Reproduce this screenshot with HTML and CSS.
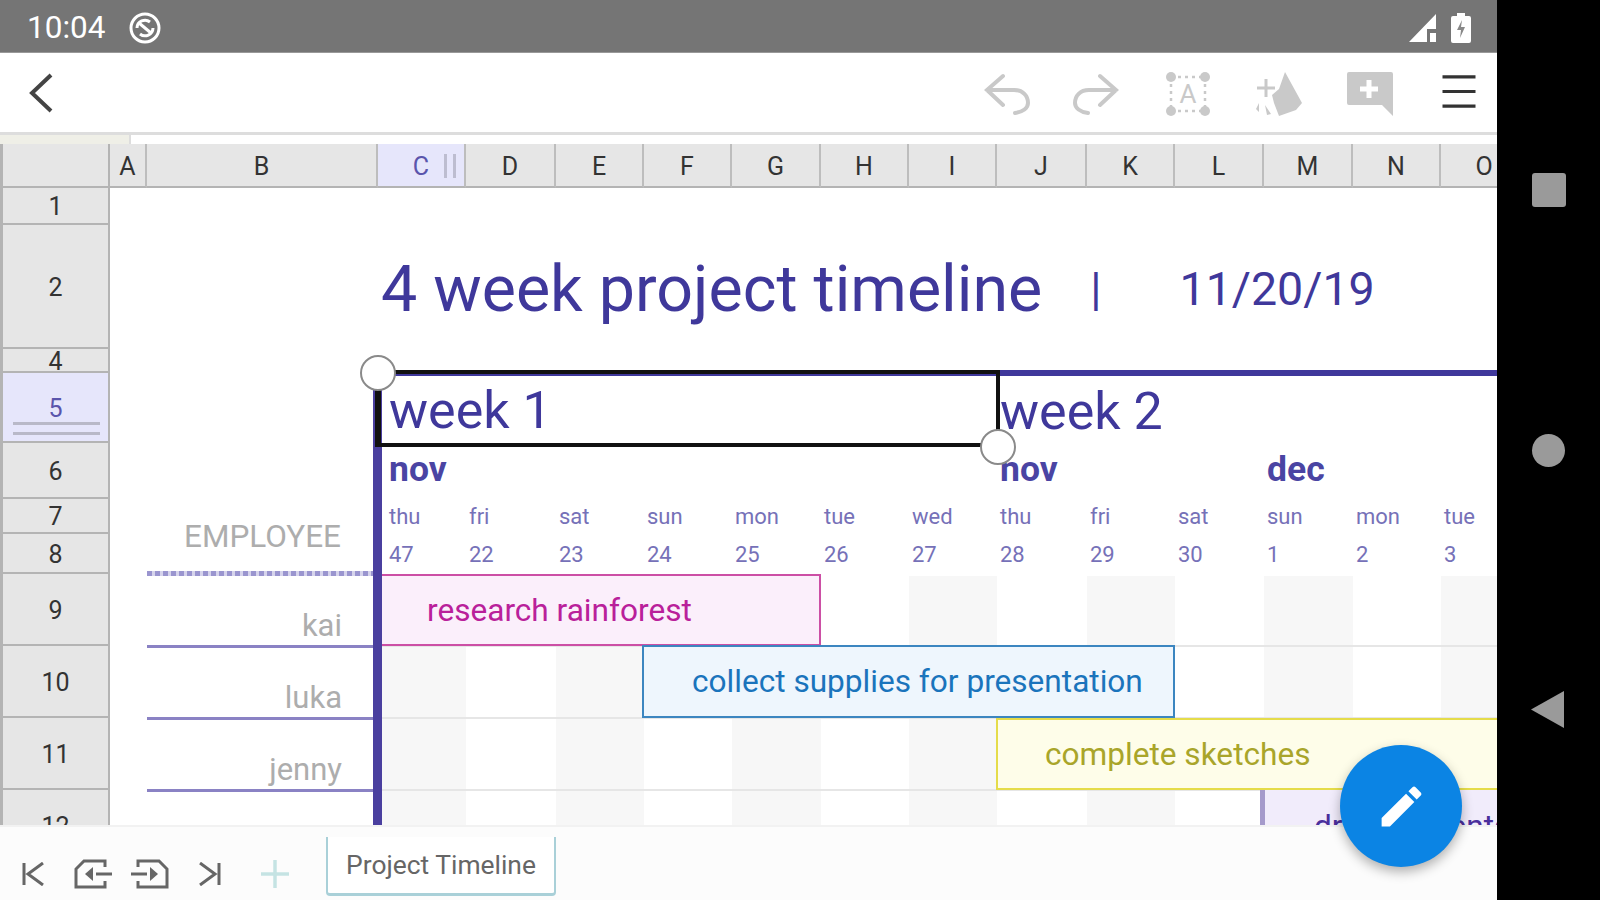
FILE: index.html
```html
<!DOCTYPE html>
<html lang="en">
<head>
    <meta charset="UTF-8">
    <meta name="viewport" content="width=device-width, initial-scale=1.0">
    <title>Project Timeline</title>
    <link rel="stylesheet" href="styles.css">
</head>
<body>
    <div class="device">
        <div class="screen">
            <div class="status-bar">
                <div class="status-left">
                    <span class="clock">10:04</span>
                    <svg width="34" height="34" viewBox="0 0 34 34" fill="none" stroke="#fff">
                        <circle cx="17" cy="17" r="14" stroke-width="3"/>
                        <path d="M9 17a8 8 0 0 1 13-6M25 17a8 8 0 0 1-13 6" stroke-width="3"/>
                        <path d="M11 12l12 10" stroke-width="3"/>
                    </svg>
                </div>
                <div class="status-right">
                    <svg width="28" height="30" viewBox="0 0 28 30" fill="#fff">
                        <path d="M0 29L27 1v15h-9v13z"/>
                        <path d="M21 20h6v9h-6z"/>
                    </svg>
                    <svg width="20" height="30" viewBox="0 0 20 30">
                        <path fill="#fff" d="M6 0h8v3h4a2 2 0 0 1 2 2v23a2 2 0 0 1-2 2H2a2 2 0 0 1-2-2V5a2 2 0 0 1 2-2h4z"/>
                        <path fill="#888" d="M11 7l-5 10h4l-1 8 5-11h-4z"/>
                    </svg>
                </div>
            </div>

            <header class="toolbar">
                <svg class="back" width="26" height="40" viewBox="0 0 26 40" fill="none" stroke="#444" stroke-width="4">
                    <path d="M23 2L4 20l19 18"/>
                </svg>
                <div class="tools">
                    <svg width="46" height="42" viewBox="0 0 46 42" fill="none" stroke="#c9c9c9" stroke-width="4" stroke-linecap="round">
                        <path d="M19 3L3 17l16 15M3 17h27c9 0 14 6 14 13 0 5-5 9-13 10"/>
                    </svg>
                    <svg width="46" height="42" viewBox="0 0 46 42" fill="none" stroke="#c9c9c9" stroke-width="4" stroke-linecap="round">
                        <path d="M27 3l16 14-16 15M43 17H16C7 17 2 23 2 30c0 5 5 9 13 10"/>
                    </svg>
                    <svg class="select-tool" width="46" height="46" viewBox="0 0 46 46" fill="#c9c9c9">
                        <circle cx="6" cy="6" r="5"/><circle cx="40" cy="6" r="5"/>
                        <circle cx="6" cy="40" r="5"/><circle cx="40" cy="40" r="5"/>
                        <path d="M6 6h34M6 40h34M6 6v34M40 6v34" fill="none" stroke="#c9c9c9" stroke-width="2.5" stroke-dasharray="3 4"/>
                        <text x="23" y="32" font-size="26" text-anchor="middle" font-family="Roboto, sans-serif">A</text>
                    </svg>
                    <svg width="50" height="46" viewBox="0 0 50 46" fill="#c9c9c9">
                        <path d="M32 1l17 31-6 7-17 6-5-13-2-8 7-6z"/>
                        <path d="M13 8v18M4 17h18" fill="none" stroke="#c9c9c9" stroke-width="3"/>
                        <path d="M6 32l-3 6 3 3zM12 34l2 10 4-1z"/>
                    </svg>
                    <svg width="46" height="44" viewBox="0 0 46 44">
                        <path fill="#c9c9c9" d="M2 0h42a2 2 0 0 1 2 2v42L35 33H2a2 2 0 0 1-2-2V2a2 2 0 0 1 2-2z"/>
                        <path fill="none" stroke="#fff" stroke-width="5" d="M22 8v18M13 17h18"/>
                    </svg>
                    <svg class="menu" width="36" height="36" viewBox="0 0 36 36" stroke="#333" stroke-width="3.5">
                        <path d="M0 2h36M0 18h36M0 34h36"/>
                    </svg>
                </div>
            </header>

            <div class="ruler"><div class="ruler-thumb"></div></div>

            <div class="sheet">
                <!-- sheet background -->
                <div class="stripe c-c"></div>
                <div class="stripe c-e"></div>
                <div class="stripe c-g"></div>
                <div class="stripe c-i"></div>
                <div class="stripe c-k"></div>
                <div class="stripe c-m"></div>
                <div class="stripe c-o"></div>
                <div class="row-line r-9"></div>
                <div class="row-line r-10"></div>
                <div class="row-line r-11"></div>

                <!-- column headers -->
                <div class="corner"></div>
                <div class="col-head c-a">A</div>
                <div class="col-head c-b">B</div>
                <div class="col-head c-c selected">C<span class="grip-v"></span></div>
                <div class="col-head c-d">D</div>
                <div class="col-head c-e">E</div>
                <div class="col-head c-f">F</div>
                <div class="col-head c-g">G</div>
                <div class="col-head c-h">H</div>
                <div class="col-head c-i">I</div>
                <div class="col-head c-j">J</div>
                <div class="col-head c-k">K</div>
                <div class="col-head c-l">L</div>
                <div class="col-head c-m">M</div>
                <div class="col-head c-n">N</div>
                <div class="col-head c-o">O</div>

                <!-- row headers -->
                <div class="row-head r-1">1</div>
                <div class="row-head r-2">2</div>
                <div class="row-head r-4">4</div>
                <div class="row-head r-5 selected">5<span class="grip-h"></span></div>
                <div class="row-head r-6">6</div>
                <div class="row-head r-7">7</div>
                <div class="row-head r-8">8</div>
                <div class="row-head r-9">9</div>
                <div class="row-head r-10">10</div>
                <div class="row-head r-11">11</div>
                <div class="row-head r-12">12</div>

                <!-- title -->
                <div class="title-cell">
                    <span class="title">4 week project timeline</span>
                    <span class="title-sep">|</span>
                    <span class="title-date">11/20/19</span>
                </div>

                <!-- weeks -->
                <div class="week-line"></div>
                <div class="week week-two">week 2</div>
                <div class="month c-c">nov</div>
                <div class="month c-j">nov</div>
                <div class="month c-m">dec</div>

                <div class="day r-7 c-c first">thu</div>
                <div class="day r-7 c-d">fri</div>
                <div class="day r-7 c-e">sat</div>
                <div class="day r-7 c-f">sun</div>
                <div class="day r-7 c-g">mon</div>
                <div class="day r-7 c-h">tue</div>
                <div class="day r-7 c-i">wed</div>
                <div class="day r-7 c-j">thu</div>
                <div class="day r-7 c-k">fri</div>
                <div class="day r-7 c-l">sat</div>
                <div class="day r-7 c-m">sun</div>
                <div class="day r-7 c-n">mon</div>
                <div class="day r-7 c-o">tue</div>

                <div class="day r-8 c-c first">47</div>
                <div class="day r-8 c-d">22</div>
                <div class="day r-8 c-e">23</div>
                <div class="day r-8 c-f">24</div>
                <div class="day r-8 c-g">25</div>
                <div class="day r-8 c-h">26</div>
                <div class="day r-8 c-i">27</div>
                <div class="day r-8 c-j">28</div>
                <div class="day r-8 c-k">29</div>
                <div class="day r-8 c-l">30</div>
                <div class="day r-8 c-m">1</div>
                <div class="day r-8 c-n">2</div>
                <div class="day r-8 c-o">3</div>

                <!-- employees -->
                <div class="employee-head">EMPLOYEE</div>
                <div class="employee-rule"></div>
                <div class="employee r-9">kai</div>
                <div class="employee r-10">luka</div>
                <div class="employee r-11">jenny</div>

                <!-- tasks -->
                <div class="task task-research">research rainforest</div>
                <div class="task task-supplies">collect supplies for presentation</div>
                <div class="task task-sketches">complete sketches</div>
                <div class="task task-draft">draft presentation</div>

                <div class="axis"></div>

                <!-- current selection -->
                <div class="selection">
                    <span class="week-one">week 1</span>
                    <span class="handle handle-start"></span>
                    <span class="handle handle-end"></span>
                </div>
            </div>

            <footer class="tabs">
                <div class="tab-nav">
                    <svg width="22" height="24" viewBox="0 0 22 24" fill="none" stroke="#666" stroke-width="3">
                        <path d="M2 1v22M21 1L6 12l15 11"/>
                    </svg>
                    <svg width="38" height="30" viewBox="0 0 38 30" fill="none" stroke="#666" stroke-width="3">
                        <path d="M31 8V2H10L2 10v18h29v-6M22 15h16"/>
                        <path d="M19 8v14l-8-7z" fill="#666" stroke="none"/>
                    </svg>
                    <svg width="38" height="30" viewBox="0 0 38 30" fill="none" stroke="#666" stroke-width="3">
                        <path d="M7 8V2h21l8 8v18H7v-6M0 15h16"/>
                        <path d="M19 8v14l8-7z" fill="#666" stroke="none"/>
                    </svg>
                    <svg width="22" height="24" viewBox="0 0 22 24" fill="none" stroke="#666" stroke-width="3">
                        <path d="M20 1v22M1 1l15 11L1 23"/>
                    </svg>
                    <svg class="add-sheet" width="28" height="28" viewBox="0 0 28 28" stroke="#c5e3e3" stroke-width="3.5">
                        <path d="M14 0v28M0 14h28"/>
                    </svg>
                </div>
                <div class="tab">Project Timeline</div>
            </footer>

            <button class="fab">
                <svg width="53" height="53" viewBox="0 0 24 24" fill="#fff">
                    <path d="M3 17.25V21h3.75L17.81 9.94l-3.75-3.75L3 17.25zM20.71 7.04c.39-.39.39-1.02 0-1.41l-2.34-2.34c-.39-.39-1.02-.39-1.41 0l-1.83 1.83 3.75 3.75 1.83-1.83z"/>
                </svg>
            </button>
        </div>

        <nav class="nav-bar">
            <div class="nav-square"></div>
            <div class="nav-circle"></div>
            <div class="nav-back"></div>
        </nav>
    </div>
</body>
</html>
```

FILE: styles.css
```css
* {
    margin: 0;
    padding: 0;
    box-sizing: border-box;
    font-family: Roboto, sans-serif;
}
body {
    background: #000;
    width: 1600px;
    height: 900px;
    overflow: hidden;
}
.device {
    display: flex;
    height: 900px;
}
.screen {
    position: relative;
    width: 1497px;
    display: flex;
    flex-direction: column;
    background: #fff;
}

/* status bar */
.status-bar {
    height: 53px;
    background: #757575;
    border-bottom: 1px solid #999;
    display: flex;
    justify-content: space-between;
    align-items: center;
    padding: 3px 26px 0 27px;
    color: #fff;
}
.status-left, .status-right {
    display: flex;
    align-items: center;
}
.status-left { gap: 23px; }
.status-right { gap: 14px; }
.clock {
    font-size: 31.5px;
}

/* toolbar */
.toolbar {
    height: 79px;
    display: flex;
    justify-content: space-between;
    align-items: center;
    padding: 0 20px 0 28px;
}
.tools {
    display: flex;
    align-items: center;
    gap: 44px;
    padding-top: 3px;
}
.tools svg:nth-child(1) { margin-right: -1px; }
.tools .select-tool { margin-left: 2px; margin-right: -2px; }
.tools .menu { margin-left: 4px; margin-top: -6px; height: 33px; }

.ruler {
    height: 12px;
    background: #fff;
    border-top: 3px solid #ddd;
}
.ruler-thumb {
    width: 131px;
    height: 9px;
    background: #efefe7;
    border-right: 2px solid #ddd;
}

/* sheet grid */
.sheet {
    height: 681px;
    overflow: hidden;
    display: grid;
    grid-template-columns: 110px 37px 231px 88px 90px 88px 88px 89px 88px 88px 90px 88px 89px 89px 88px 88px;
    grid-template-rows: 44px 37px 124px 24px 70px 56px 35px 40px 72px 72px 72px 72px;
}
.c-a { grid-column: 2; }
.c-b { grid-column: 3; }
.c-c { grid-column: 4; }
.c-d { grid-column: 5; }
.c-e { grid-column: 6; }
.c-f { grid-column: 7; }
.c-g { grid-column: 8; }
.c-h { grid-column: 9; }
.c-i { grid-column: 10; }
.c-j { grid-column: 11; }
.c-k { grid-column: 12; }
.c-l { grid-column: 13; }
.c-m { grid-column: 14; }
.c-n { grid-column: 15; }
.c-o { grid-column: 16; }
.r-1 { grid-row: 2; }
.r-2 { grid-row: 3; }
.r-4 { grid-row: 4; }
.r-5 { grid-row: 5; }
.r-6 { grid-row: 6; }
.r-7 { grid-row: 7; }
.r-8 { grid-row: 8; }
.r-9 { grid-row: 9; }
.r-10 { grid-row: 10; }
.r-11 { grid-row: 11; }
.r-12 { grid-row: 12; }

.stripe {
    grid-row: 9 / 13;
    background: #f7f7f7;
    margin-top: 2px;
}
.row-line {
    grid-column: 4 / 17;
    align-self: end;
    height: 2px;
    margin-bottom: -1px;
    background: #e6e6e6;
}

.corner, .col-head, .row-head {
    background: #e6e6e6;
    color: #333;
    font-size: 25px;
    display: flex;
    justify-content: center;
    align-items: center;
}
.corner {
    grid-column: 1;
    grid-row: 1;
    border-left: 3px solid #b4b4b4;
    border-right: 2px solid #b4b4b4;
    border-bottom: 2px solid #b4b4b4;
}
.col-head {
    grid-row: 1;
    border-right: 2px solid #bdbdbd;
    border-bottom: 2px solid #b4b4b4;
    padding-top: 2px;
}
.row-head {
    grid-column: 1;
    border-left: 3px solid #b4b4b4;
    border-right: 2px solid #b4b4b4;
    border-bottom: 2px solid #b4b4b4;
    padding-top: 2px;
}
.selected {
    background: #e6e6fb;
    color: #5a55ac;
    position: relative;
}
.grip-v {
    position: absolute;
    right: 8px;
    top: 10px;
    width: 12px;
    height: 24px;
    border-left: 3px solid #bdbdd0;
    border-right: 3px solid #bdbdd0;
}
.grip-h {
    position: absolute;
    left: 10px;
    bottom: 6px;
    width: 87px;
    height: 13px;
    border-top: 3px solid #b9b9c8;
    border-bottom: 3px solid #b9b9c8;
}

/* title row */
.title-cell {
    grid-column: 4 / 17;
    grid-row: 3;
    display: flex;
    align-items: center;
    color: #3f389b;
    padding-left: 3px;
    padding-top: 4px;
}
.title {
    font-size: 64.5px;
}
.title-sep {
    font-size: 46px;
    margin-left: 48px;
}
.title-date {
    font-size: 46.5px;
    margin-left: 78px;
}

/* weeks, months, days */
.week-line {
    grid-column: 4 / 17;
    grid-row: 5;
    height: 6px;
    margin-top: -3px;
    background: #3f389b;
}
.week {
    font-size: 52px;
    color: #3f389b;
    display: flex;
    align-items: center;
}
.week-two {
    grid-column: 11 / 15;
    grid-row: 5;
    padding-left: 3px;
    padding-top: 6px;
}
.month {
    grid-row: 6;
    font-size: 35.5px;
    font-weight: bold;
    color: #4a44a3;
    display: flex;
    align-items: center;
    white-space: nowrap;
    padding-left: 3px;
    padding-bottom: 4px;
}
.month.c-c { padding-left: 11px; }
.day {
    font-size: 22px;
    color: #7671b8;
    display: flex;
    align-items: center;
    padding-left: 3px;
}
.day.first { padding-left: 11px; }

/* employees */
.employee-head {
    grid-column: 3;
    grid-row: 7 / 9;
    font-size: 31.5px;
    color: #adadad;
    display: flex;
    justify-content: center;
    align-items: center;
}
.employee-rule {
    grid-column: 3;
    grid-row: 8;
    align-self: end;
    height: 5px;
    margin-bottom: -2px;
    background: repeating-linear-gradient(90deg, #9a95cf 0 5px, #d6d4ec 5px 8px);
}
.employee {
    grid-column: 3;
    font-size: 31px;
    color: #adadad;
    text-align: right;
    align-self: end;
    padding-right: 36px;
    line-height: 38px;
    margin-bottom: -2px;
    border-bottom: 3px solid #8a82c4;
}

/* task bars */
.task {
    font-size: 31.6px;
    display: flex;
    align-items: center;
    white-space: nowrap;
    overflow: hidden;
    padding-left: 47px;
    border: 2px solid;
}
.task-research {
    grid-column: 4 / 9;
    grid-row: 9;
    background: #fbeffb;
    border-color: #cc4fa5;
    border-left: 0;
    color: #b9209a;
    padding-left: 49px;
}
.task-supplies {
    grid-column: 7 / 13;
    grid-row: 10;
    background: #eef6fd;
    border-color: #3c86c0;
    color: #1a74bc;
    margin-top: -1px;
    margin-left: -2px;
    padding-left: 48px;
}
.task-sketches {
    grid-column: 11 / 17;
    grid-row: 11;
    background: #fefde9;
    border-color: #e5dc4a;
    color: #a9a52a;
    margin-left: -1px;
}
.task-draft {
    grid-column: 14 / 17;
    grid-row: 12;
    background: #f1ecfb;
    border: 0;
    border-left: 5px solid #a59acb;
    color: #4a2f9c;
    margin-left: -4px;
    padding-left: 49px;
}

.axis {
    grid-column: 4;
    grid-row: 4 / 13;
    margin-top: 24px;
    margin-left: -5px;
    width: 9px;
    background: #4a3f9f;
}

/* selected cell */
.selection {
    grid-column: 4 / 11;
    grid-row: 5;
    position: relative;
    height: 77px;
    margin-top: -3px;
    margin-left: -3px;
    margin-right: -3px;
    border: 4px solid #111;
    border-left-width: 6px;
    font-size: 52px;
    color: #3f389b;
    display: flex;
    align-items: center;
    padding-left: 8px;
    padding-top: 3px;
}
.handle {
    position: absolute;
    width: 36px;
    height: 36px;
    border-radius: 50%;
    background: #fff;
    border: 2px solid #8a8a8a;
}
.handle-start {
    left: -21px;
    top: -19px;
}
.handle-end {
    right: -20px;
    bottom: -22px;
}

/* bottom tabs */
.tabs {
    flex: 1;
    display: flex;
    background: #fcfcfc;
    border-top: 2px solid #f2f2f2;
    padding-left: 22px;
}
.tab-nav {
    display: flex;
    align-items: center;
    gap: 30px;
    width: 304px;
    padding-top: 20px;
}
.tab-nav svg:nth-child(3) { margin-left: -11px; }
.add-sheet { margin-left: 10px; }
.tab {
    width: 230px;
    height: 59px;
    margin-top: 10px;
    background: #fff;
    color: #666;
    font-size: 26.4px;
    display: flex;
    justify-content: center;
    align-items: center;
    border: 2px solid #a9d0d8;
    border-top: 0;
    border-bottom-width: 3px;
    border-radius: 0 0 4px 4px;
}

/* floating button */
.fab {
    position: absolute;
    right: 35px;
    bottom: 33px;
    width: 122px;
    height: 122px;
    border: none;
    border-radius: 50%;
    background: #0b84e4;
    box-shadow: 0 5px 12px rgba(0, 0, 0, 0.3);
    display: flex;
    justify-content: center;
    align-items: center;
}

/* android nav bar */
.nav-bar {
    flex: 1;
    background: #000;
    position: relative;
}
.nav-square, .nav-circle, .nav-back {
    position: absolute;
    background: #9a9a9a;
}
.nav-square {
    left: 35px;
    top: 173px;
    width: 34px;
    height: 34px;
    border-radius: 3px;
}
.nav-circle {
    left: 35px;
    top: 434px;
    width: 33px;
    height: 33px;
    border-radius: 50%;
}
.nav-back {
    left: 34px;
    top: 691px;
    width: 33px;
    height: 37px;
    clip-path: polygon(100% 0, 100% 100%, 0 50%);
}
```
